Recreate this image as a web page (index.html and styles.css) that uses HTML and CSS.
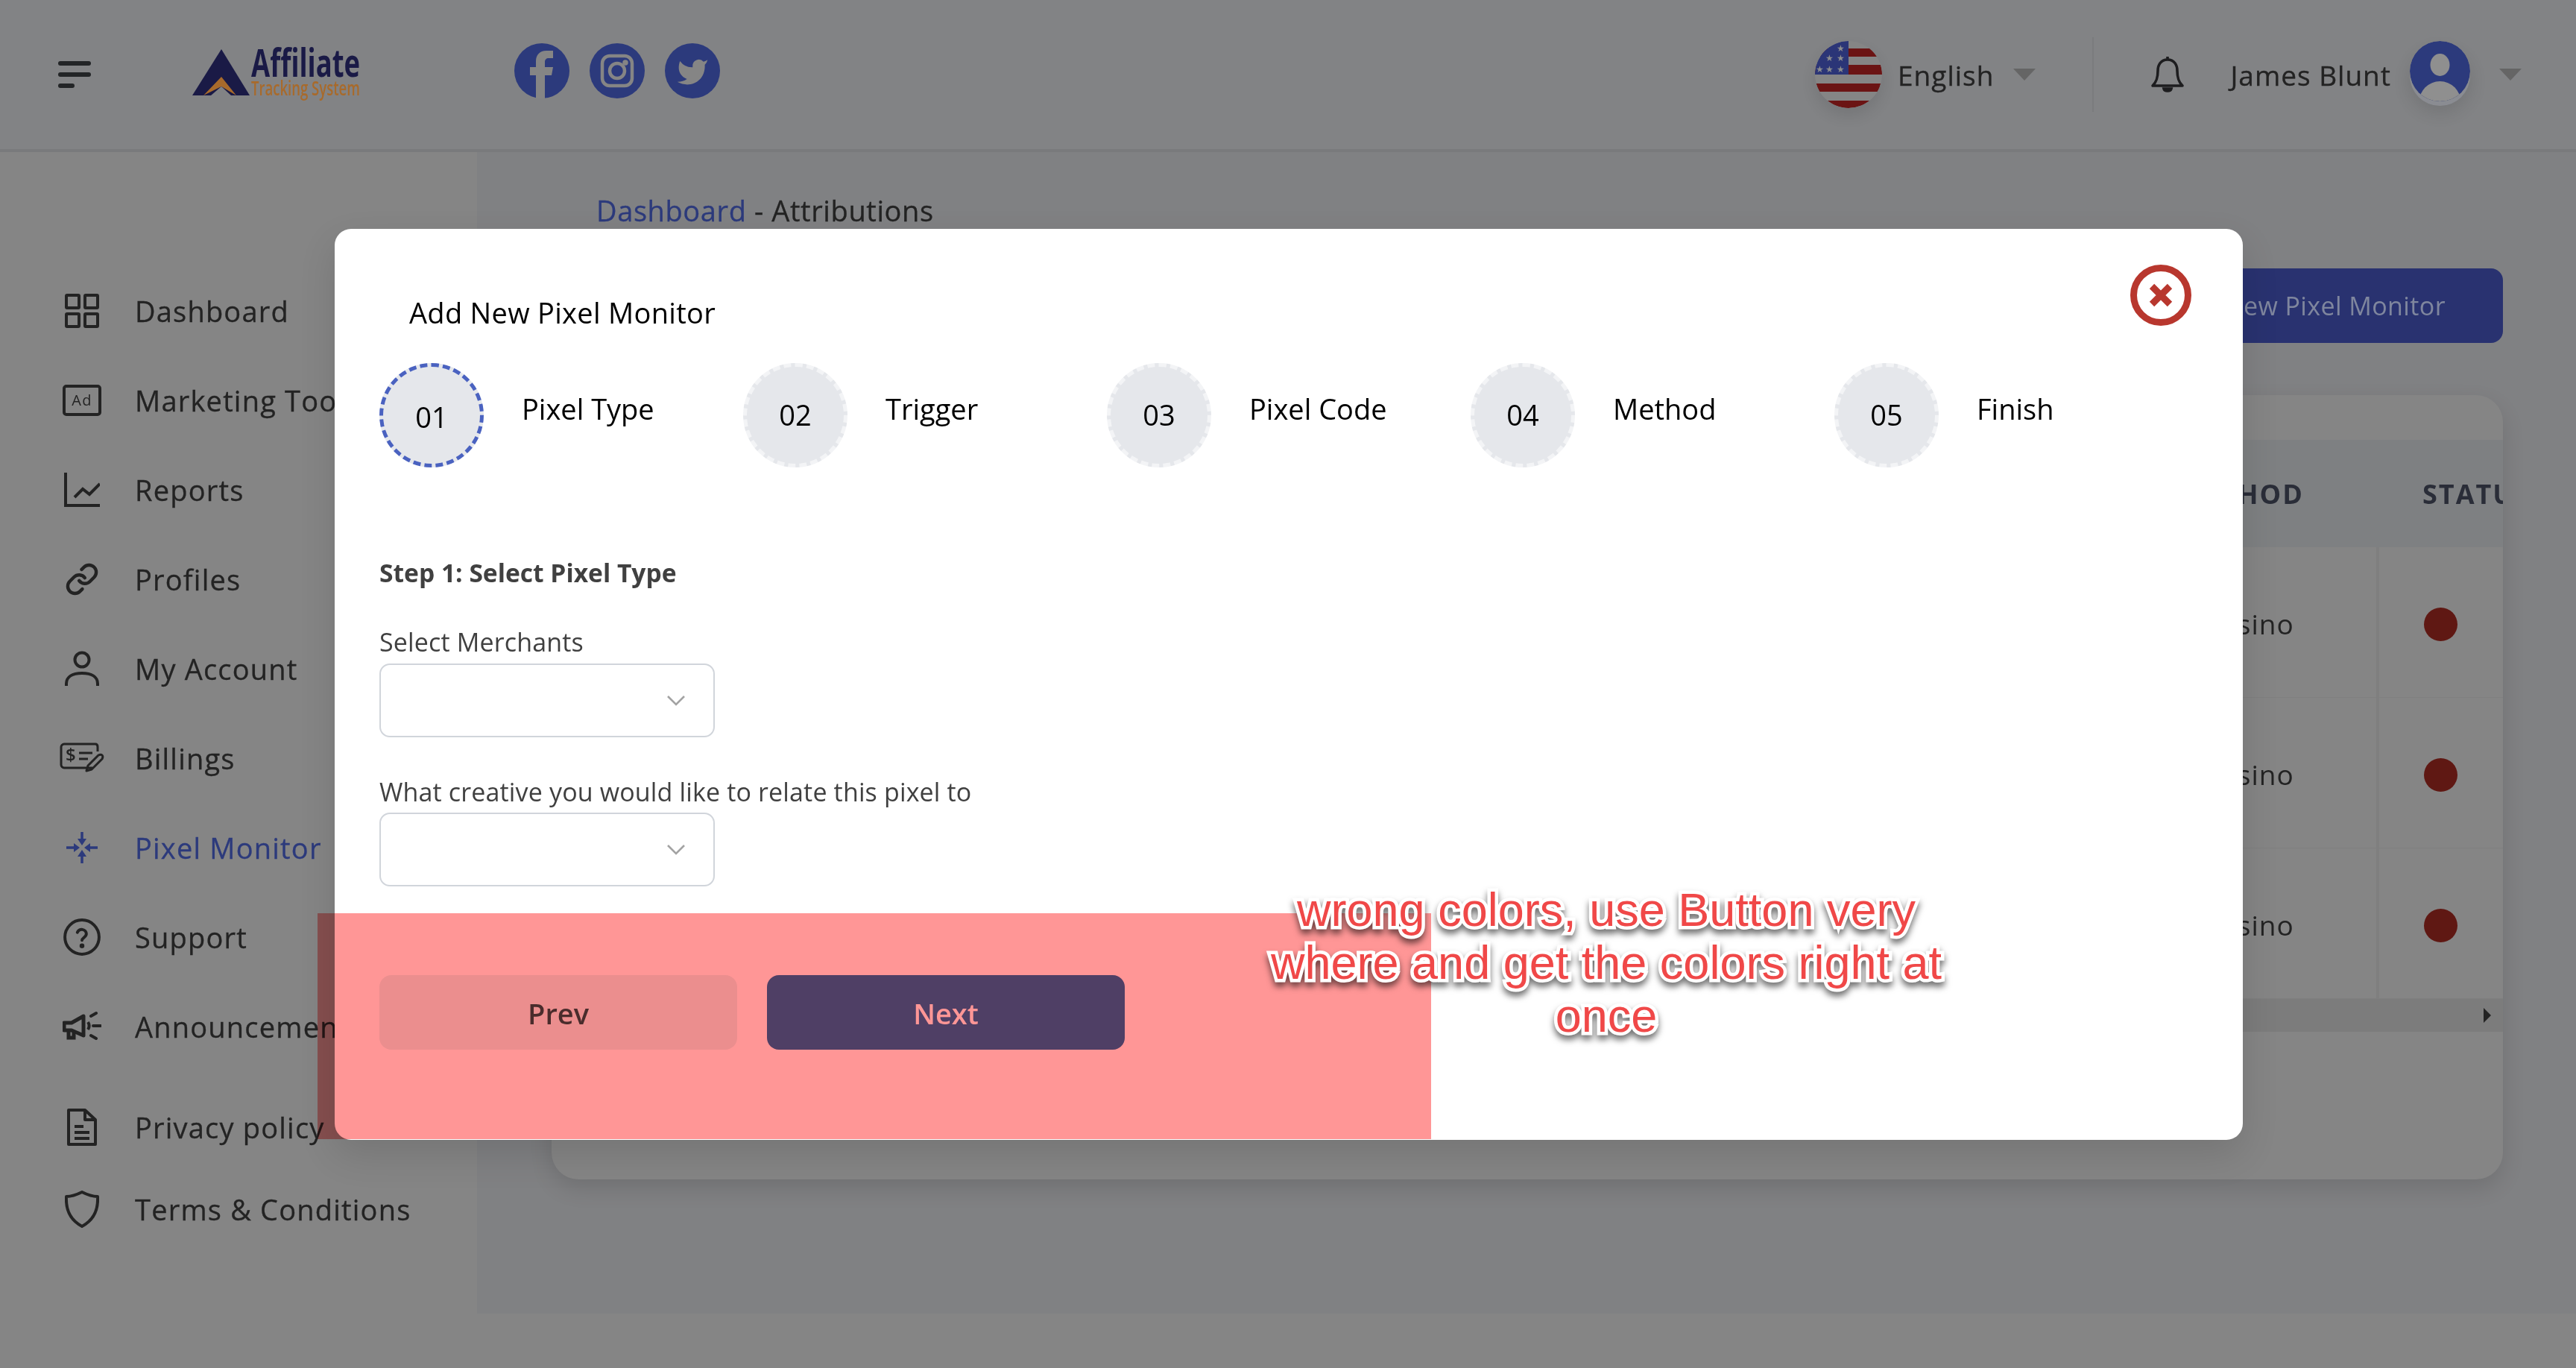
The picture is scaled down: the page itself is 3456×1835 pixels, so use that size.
FILE: index.html
```html
<!DOCTYPE html>
<html lang="en">
<head>
  <meta charset="UTF-8">
  <title>Pixel Monitor - Attributions</title>
  <link rel="stylesheet" href="styles.css">
</head>
<body>
  <!-- Top bar -->
  <header class="topbar">
    <button class="menu-btn"><span></span><span></span><span class="short"></span></button>
    <svg class="logo" viewBox="0 0 226 80">
      <polygon points="39,6 77,68 0,68" fill="#1a1a46"/>
      <polygon points="15,68 39,43 59,68 39,56" fill="#a86a2b"/>
      <polygon points="25,68 39,56 52,68" fill="#828385"/>
      <text x="79" y="43" class="logo-top" textLength="146" lengthAdjust="spacingAndGlyphs">Affiliate</text>
      <text x="79" y="68" class="logo-sub" textLength="146" lengthAdjust="spacingAndGlyphs">Tracking System</text>
    </svg>
    <div class="socials">
      <a class="social"><svg viewBox="0 0 74 74"><path d="M41 74V43h9l2-11H41v-7c0-3 2-5 5-5h6V10h-9c-9 0-14 6-14 14v8H21v11h8v31z" fill="#858585"/></svg></a>
      <a class="social"><svg viewBox="0 0 74 74" fill="none" stroke="#858585" stroke-width="4.5"><rect x="17" y="17" width="40" height="40" rx="10"/><circle cx="37" cy="37" r="10"/><circle cx="48" cy="26" r="1.5" fill="#858585"/></svg></a>
      <a class="social"><svg viewBox="-8 -9 40 40"><path d="M23 3a10.9 10.9 0 0 1-3 1.4 4.48 4.48 0 0 0-7.86 3v1A10.66 10.66 0 0 1 3 4s-4 9 5 13a11.64 11.64 0 0 1-7 2c9 5 20 0 20-11.5a4.5 4.5 0 0 0-.08-.83A7.72 7.72 0 0 0 23 3z" fill="#858585"/></svg></a>
    </div>

    <div class="top-right">
      <svg class="flag" viewBox="0 0 90 90">
        <defs><clipPath id="flagClip"><circle cx="45" cy="45" r="45"/></clipPath></defs>
        <g clip-path="url(#flagClip)">
          <rect width="90" height="90" fill="#858585"/>
          <rect y="10" width="90" height="11" fill="#6b1414"/>
          <rect y="32" width="90" height="13" fill="#6b1414"/>
          <rect y="57" width="90" height="11" fill="#6b1414"/>
          <rect y="80" width="90" height="10" fill="#6b1414"/>
          <rect width="45" height="45" fill="#2b3577"/>
          <g fill="#8d8d8d" font-size="12" font-family="DejaVu Sans">
            <text x="29" y="14">★</text>
            <text x="14" y="27">★</text><text x="29" y="27">★</text>
            <text x="1" y="42">★</text><text x="14" y="42">★</text><text x="29" y="42">★</text>
          </g>
        </g>
      </svg>
      <span class="top-label lang">English</span>
      <span class="caret"></span>
      <span class="top-divider"></span>
      <svg class="bell" viewBox="0 0 46 50" fill="none" stroke="#1d1d1f" stroke-width="3.6"><path d="M23 5c-9 0-13 7-13 15 0 10-2 15-7 20h40c-5-5-7-10-7-20 0-8-4-15-13-15z" stroke-linejoin="round"/><path d="M23 1v4"/><path d="M18 44c1 4 9 4 10 0z" fill="#1d1d1f"/></svg>
      <span class="top-label user">James Blunt</span>
      <svg class="avatar" viewBox="0 0 81 81">
        <defs><clipPath id="avClip"><circle cx="40.5" cy="40.5" r="40.5"/></clipPath></defs>
        <circle cx="40.5" cy="40.5" r="40.5" fill="#2c3a7c"/>
        <g clip-path="url(#avClip)" fill="#8f8f8f"><ellipse cx="40.5" cy="32" rx="13" ry="15"/><ellipse cx="40.5" cy="82" rx="28" ry="28"/></g>
      </svg>
      <span class="caret"></span>
    </div>
  </header>

  <div class="layout">
    <!-- Sidebar -->
    <aside class="sidebar">
      <ul class="nav">
        <li class="nav-item">
          <span class="nav-icon"><svg width="46" height="46" viewBox="0 0 46 46" fill="none" stroke="currentColor" stroke-width="4"><rect x="2" y="2" width="17" height="17" rx="1"/><rect x="27" y="2" width="17" height="17" rx="1"/><rect x="2" y="27" width="17" height="17" rx="1"/><rect x="27" y="27" width="17" height="17" rx="1"/></svg></span>Dashboard
        </li>
        <li class="nav-item">
          <span class="nav-icon"><svg width="52" height="42" viewBox="0 0 52 42" fill="none" stroke="currentColor" stroke-width="4"><rect x="2" y="2" width="48" height="38" rx="3"/><text x="26" y="28" text-anchor="middle" class="ad-text">Ad</text></svg></span>Marketing Tools
        </li>
        <li class="nav-item">
          <span class="nav-icon"><svg width="48" height="48" viewBox="0 0 48 48" fill="none" stroke="currentColor" stroke-width="4"><path d="M2 1v44h46"/><path d="M14 34l11-11 9 7 14-14"/></svg></span>Reports
        </li>
        <li class="nav-item">
          <span class="nav-icon"><svg width="46" height="46" viewBox="0 0 24 24" fill="none" stroke="currentColor" stroke-width="2.3" stroke-linecap="round" stroke-linejoin="round"><path d="M10 13a5 5 0 0 0 7.54.54l3-3a5 5 0 0 0-7.07-7.07l-1.72 1.71"/><path d="M14 11a5 5 0 0 0-7.54-.54l-3 3a5 5 0 0 0 7.07 7.07l1.71-1.71"/></svg></span>Profiles
        </li>
        <li class="nav-item">
          <span class="nav-icon"><svg width="46" height="48" viewBox="0 0 46 48" fill="none" stroke="currentColor" stroke-width="4"><circle cx="23" cy="12" r="9.5"/><path d="M2 47v-3c0-9 8-14 21-14s21 5 21 14v3"/></svg></span>My Account
        </li>
        <li class="nav-item">
          <span class="nav-icon"><svg width="60" height="42" viewBox="0 0 60 42" fill="none" stroke="currentColor" stroke-width="3"><path d="M44 34H6c-2 0-4-2-4-4V6c0-2 2-4 4-4h42c2 0 3 2 3 4v6"/><path d="M26 14h18M26 22h12"/><text x="8" y="25" class="bill-text">$</text><path d="M36 38l2-7 14-14c2-1 4-1 5 0s1 3 0 5L43 36z" stroke-linejoin="round"/></svg></span>Billings
        </li>
        <li class="nav-item active">
          <span class="nav-icon"><svg width="42" height="42" viewBox="0 0 42 42" fill="none" stroke="currentColor" stroke-width="3.5"><path d="M0 21h13M29 21h13M21 0v11M21 31v11"/><g fill="currentColor" stroke="none"><path d="M18 21l-8-6v12zM24 21l8-6v12zM21 18l-6-9h12zM21 24l-6 9h12z"/></g></svg></span>Pixel Monitor
        </li>
        <li class="nav-item">
          <span class="nav-icon"><svg width="50" height="50" viewBox="0 0 24 24" fill="none" stroke="currentColor" stroke-width="1.9" stroke-linecap="round"><circle cx="12" cy="12" r="11"/><path d="M9 9a3 3 0 0 1 5.8 1c0 2-2.8 2.6-2.8 4"/><circle cx="12" cy="17.6" r=".6" fill="currentColor"/></svg></span>Support
        </li>
        <li class="nav-item">
          <span class="nav-icon"><svg width="52" height="42" viewBox="0 0 52 42" fill="none" stroke="currentColor" stroke-width="5"><path d="M2 16h10L28 7v26l-16-7H2z" stroke-linejoin="round"/><path d="M8 26v10h7V28"/><path d="M34 15c2 3 2 7 0 10" stroke-width="4"/><path d="M38 7l7-4M41 20h10M38 33l7 4" stroke-linecap="round" stroke-width="4"/></svg></span>Announcements
        </li>
      </ul>
      <ul class="nav nav-legal">
        <li class="nav-item">
          <span class="nav-icon"><svg width="42" height="50" viewBox="0 0 42 50" fill="none" stroke="currentColor" stroke-width="4" stroke-linejoin="round"><path d="M3 2h22l14 13v33H3z"/><path d="M25 2v13h14"/><path d="M11 24h12M11 32h20M11 40h20"/></svg></span>Privacy policy
        </li>
        <li class="nav-item">
          <span class="nav-icon"><svg width="46" height="50" viewBox="0 0 46 50" fill="none" stroke="currentColor" stroke-width="4" stroke-linejoin="round"><path d="M23 2c8 4 14 6 21 6 1 18-6 32-21 40C8 40 1 26 2 8c7 0 13-2 21-6z"/></svg></span>Terms &amp; Conditions
        </li>
      </ul>
    </aside>

    <!-- Main content -->
    <main class="content">
      <div class="breadcrumb"><a>Dashboard</a> - Attributions</div>
      <div class="toolbar"><a class="add-btn">Add New Pixel Monitor</a></div>
      <section class="card">
        <div class="card-top"></div>
        <div class="row row-head">
          <div></div>
          <div class="cell method-head">METHOD</div>
          <div class="cell status-head">STATUS</div>
        </div>
        <div class="row">
          <div></div>
          <div class="cell method-cell">Casino</div>
          <div class="cell status-cell"><span class="dot"></span></div>
        </div>
        <div class="row">
          <div></div>
          <div class="cell method-cell">Casino</div>
          <div class="cell status-cell"><span class="dot"></span></div>
        </div>
        <div class="row">
          <div></div>
          <div class="cell method-cell">Casino</div>
          <div class="cell status-cell"><span class="dot"></span></div>
        </div>
        <div class="scrollbar"><span class="scroll-arrow"></span></div>
      </section>
    </main>
  </div>

  <footer class="footer"></footer>

  <!-- Add pixel dialog -->
  <div class="modal">
    <svg class="modal-close" viewBox="0 0 82 82" fill="none" stroke="#b8372e"><circle cx="41" cy="41" r="36.5" stroke-width="9"/><path d="M29 29l24 24M53 29L29 53" stroke-width="9"/></svg>
    <h3 class="modal-title">Add New Pixel Monitor</h3>
    <div class="steps">
      <div class="step current"><span class="step-num">01</span><span class="step-label">Pixel Type</span></div>
      <div class="step"><span class="step-num">02</span><span class="step-label">Trigger</span></div>
      <div class="step"><span class="step-num">03</span><span class="step-label">Pixel Code</span></div>
      <div class="step"><span class="step-num">04</span><span class="step-label">Method</span></div>
      <div class="step"><span class="step-num">05</span><span class="step-label">Finish</span></div>
    </div>
    <h4 class="form-heading">Step 1: Select Pixel Type</h4>
    <label class="field-label">Select Merchants</label>
    <div class="select"><svg width="24" height="14" viewBox="0 0 24 14" fill="none" stroke="#a3a3a3" stroke-width="2.6"><path d="M1 1l11 11L23 1"/></svg></div>
    <label class="field-label second">What creative you would like to relate this pixel to</label>
    <div class="select"><svg width="24" height="14" viewBox="0 0 24 14" fill="none" stroke="#a3a3a3" stroke-width="2.6"><path d="M1 1l11 11L23 1"/></svg></div>
    <div class="modal-actions">
      <button class="btn btn-prev">Prev</button>
      <button class="btn btn-next">Next</button>
    </div>
  </div>

  <!-- Review note painted over the shot -->
  <div class="note-highlight"></div>
  <div class="note-text">wrong colors, use Button very where and get the colors right at once</div>
</body>
</html>
```

FILE: styles.css
```css
/* Global */
* {
  box-sizing: border-box;
}
html, body {
  margin: 0;
  padding: 0;
}
body {
  position: relative;
  width: 3456px;
  height: 1835px;
  overflow: hidden;
  background: #858585;
  font-family: "Open Sans", "Noto Sans", sans-serif;
  color: #232323;
}
ul {
  list-style: none;
  margin: 0;
  padding: 0;
}

/* Top bar */
.topbar {
  display: flex;
  align-items: center;
  height: 204px;
  padding: 0 73px 0 78px;
  background: #828385;
  border-bottom: 4px solid #797a7c;
}
.menu-btn {
  display: flex;
  flex-direction: column;
  gap: 9px;
  width: 44px;
  padding: 0;
  border: 0;
  background: none;
}
.menu-btn span {
  display: block;
  width: 44px;
  height: 6px;
  border-radius: 3px;
  background: #232527;
}
.menu-btn .short {
  width: 22px;
}
.logo {
  width: 226px;
  height: 80px;
  margin-left: 136px;
  overflow: visible;
}
.logo-top {
  font-family: "Open Sans", sans-serif;
  font-size: 52px;
  font-weight: 700;
  fill: #1a1a46;
}
.logo-sub {
  font-family: "Open Sans", sans-serif;
  font-size: 27px;
  font-weight: 600;
  fill: #a86a2b;
}
.socials {
  display: flex;
  gap: 27px;
  margin: -10px 0 0 206px;
}
.social {
  display: block;
  width: 74px;
  height: 74px;
  border-radius: 50%;
  background: #2c3a7c;
}
.social svg {
  display: block;
}
.top-right {
  display: flex;
  align-items: center;
  margin-left: auto;
}
.flag {
  width: 90px;
  height: 90px;
  border-radius: 50%;
  box-shadow: 0 10px 20px rgba(0, 0, 0, 0.1);
}
.top-label {
  font-size: 37px;
  font-weight: 500;
  letter-spacing: 1px;
  -webkit-text-stroke: 0.3px currentColor;
  color: #232323;
}
.lang {
  margin-left: 21px;
}
.caret {
  width: 0;
  height: 0;
  border-left: 15px solid transparent;
  border-right: 15px solid transparent;
  border-top: 16px solid #656565;
}
.lang + .caret {
  margin-left: 26px;
}
.top-divider {
  width: 2px;
  height: 100px;
  margin: 0 76px;
  background: #7a7b7d;
}
.bell {
  width: 46px;
  height: 50px;
}
.user {
  margin-left: 61px;
}
.avatar {
  width: 81px;
  height: 81px;
  margin: -10px 39px 0 25px;
  border-radius: 50%;
  box-shadow: 0 6px 0 #8a8c92, 0 14px 24px rgba(0, 0, 0, 0.12);
}

/* Page layout */
.layout {
  display: flex;
  height: 1558px;
}

/* Sidebar */
.sidebar {
  width: 640px;
  padding-top: 153px;
  background: #858585;
}
.nav-item {
  display: flex;
  align-items: center;
  gap: 37px;
  height: 120px;
  padding-left: 76px;
  font-size: 38px;
  font-weight: 500;
  letter-spacing: 1.2px;
  -webkit-text-stroke: 0.3px currentColor;
  white-space: nowrap;
  color: #232323;
}
.nav-icon {
  display: flex;
  justify-content: center;
  align-items: center;
  width: 68px;
}
.nav-item.active {
  color: #2c3a7c;
}
.nav-legal {
  margin-top: 20px;
}
.nav-legal .nav-item {
  height: 110px;
}
.ad-text {
  font-family: "Open Sans", sans-serif;
  font-size: 20px;
  fill: currentColor;
  stroke: none;
}
.bill-text {
  font-family: "Open Sans", sans-serif;
  font-size: 24px;
  font-weight: 600;
  fill: currentColor;
  stroke: none;
}

/* Main content */
.content {
  flex: 1;
  min-width: 0;
  padding: 53px 98px 0 100px;
  background: #808183;
}
.breadcrumb {
  padding-left: 60px;
  font-size: 38px;
  font-weight: 500;
  letter-spacing: 0.6px;
  -webkit-text-stroke: 0.3px currentColor;
  line-height: 50px;
  color: #232323;
}
.breadcrumb a {
  color: #2c3a7c;
}
.toolbar {
  display: flex;
  justify-content: flex-end;
  margin-top: 53px;
}
.add-btn {
  height: 100px;
  padding: 0 77px 0 60px;
  border-radius: 16px;
  background: #293270;
  font-size: 34px;
  letter-spacing: 0.4px;
  line-height: 100px;
  color: #7f869e;
}

/* Table card */
.card {
  height: 1052px;
  margin-top: 70px;
  border-radius: 36px;
  background: #858585;
  box-shadow: 0 12px 30px rgba(0, 0, 0, 0.12);
  overflow: hidden;
}
.card-top {
  height: 60px;
}
.row {
  display: grid;
  grid-template-columns: 2146px 302px 1fr;
  height: 202px;
  border-bottom: 1px solid #7f7f7f;
}
.row-head {
  height: 144px;
  background: #7e8082;
  border-bottom: 0;
  font-weight: 700;
  letter-spacing: 2px;
  color: #2a2d38;
}
.cell {
  display: flex;
  align-items: center;
  font-size: 38px;
  white-space: nowrap;
}
.row-head .cell {
  font-size: 36px;
}
.method-head {
  padding-left: 35px;
}
.method-cell {
  padding: 4px 0 0 70px;
  font-size: 37px;
  letter-spacing: 1px;
}
.status-cell {
  padding: 6px 0 0 60px;
  border-left: 4px solid #7f7f7f;
}
.status-head {
  padding-left: 62px;
}
.dot {
  width: 45px;
  height: 45px;
  border-radius: 50%;
  background: #5f1813;
}
.scrollbar {
  display: flex;
  justify-content: flex-end;
  align-items: center;
  height: 44px;
  padding-right: 16px;
  background: #7c7c7c;
}
.scroll-arrow {
  width: 0;
  height: 0;
  border-top: 10px solid transparent;
  border-bottom: 10px solid transparent;
  border-left: 10px solid #232323;
}

/* Footer */
.footer {
  height: 73px;
  background: #858585;
}

/* Dialog */
.modal {
  position: absolute;
  left: 449px;
  top: 307px;
  width: 2560px;
  height: 1222px;
  padding: 84px 60px 0;
  border-radius: 22px;
  background: #fff;
  box-shadow: 0 20px 50px rgba(0, 0, 0, 0.12);
  color: #000;
}
.modal-close {
  position: absolute;
  right: 69px;
  top: 48px;
  width: 82px;
  height: 82px;
}
.modal-title {
  margin: 0 0 40px 40px;
  font-size: 38px;
  font-weight: 400;
  letter-spacing: 0.3px;
  line-height: 56px;
}
.steps {
  display: flex;
}
.step {
  display: flex;
  width: 488px;
}
.step-num {
  display: flex;
  justify-content: center;
  align-items: center;
  width: 140px;
  height: 140px;
  padding-bottom: 2px;
  border: 5px dashed #f3f4f6;
  border-radius: 50%;
  background: #e5e7eb;
  font-size: 38px;
}
.step.current .step-num {
  padding: 4px 0 0;
  border-color: #4a62c0;
}
.step-label {
  margin: 38px 0 0 51px;
  font-size: 38px;
  line-height: 46px;
}
.form-heading {
  margin: 118px 0 0;
  font-size: 33.6px;
  font-weight: 700;
  line-height: 46px;
  color: #404040;
}
.field-label {
  display: block;
  margin: 50px 0 9px;
  font-size: 34px;
  letter-spacing: 0.15px;
  line-height: 40px;
  color: #404040;
}
.field-label.second {
  margin: 53px 0 8px;
}
.select {
  display: flex;
  justify-content: flex-end;
  align-items: center;
  width: 450px;
  height: 99px;
  padding-right: 38px;
  border: 2px solid #d1d5db;
  border-radius: 14px;
}
.modal-actions {
  display: flex;
  gap: 40px;
  margin-top: 119px;
}
.btn {
  width: 480px;
  height: 100px;
  padding-top: 2px;
  border: 0;
  border-radius: 16px;
  font-family: inherit;
  font-size: 38px;
  font-weight: 600;
}
.btn-prev {
  background: #ebf2f2;
  color: #4a4a4a;
}
.btn-next {
  background: #4f6bac;
  color: #fff;
}

/* Review note */
.note-highlight {
  position: absolute;
  left: 426px;
  top: 1225px;
  width: 1494px;
  height: 303px;
  background: #ff9696;
  mix-blend-mode: multiply;
}
.note-text {
  position: absolute;
  left: 1675px;
  top: 1185px;
  width: 960px;
  font-family: "Liberation Sans", Arial, sans-serif;
  font-size: 63px;
  line-height: 71px;
  text-align: center;
  color: #f04848;
  -webkit-text-stroke: 9px #fff;
  paint-order: stroke fill;
  filter: drop-shadow(0 6px 4px rgba(0, 0, 0, 0.55));
}
```
